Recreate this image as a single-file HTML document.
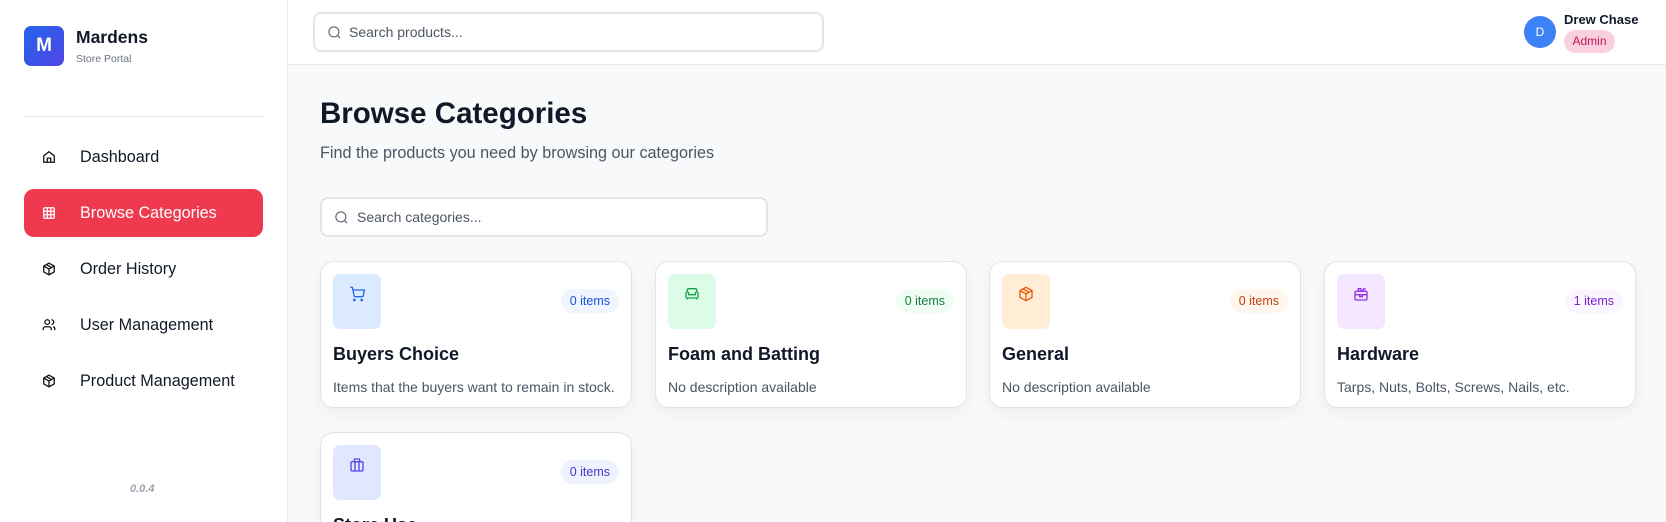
<!DOCTYPE html>
<html style="width:1666px;height:522px;overflow:hidden"><head><meta charset="utf-8"><style>
*{box-sizing:border-box;margin:0;padding:0}
body{width:1666px;height:522px;overflow:hidden;font-family:"Liberation Sans",sans-serif;background:#f8f9fb;position:relative;color:#111827}
.sb{position:absolute;left:0;top:0;width:288px;height:522px;background:#fff;border-right:1px solid #e5e7eb}
.logo{position:absolute;left:24px;top:26px;width:40px;height:40px;border-radius:7px;background:linear-gradient(135deg,#2563eb,#4f46e5);color:#fff;font-weight:bold;font-size:19px;text-align:center;line-height:40px}
.bn{position:absolute;left:76px;top:27px;font-size:17.5px;font-weight:bold;color:#111827}
.bs{position:absolute;left:76px;top:53px;font-size:10.5px;color:#6b7280}
.div{position:absolute;left:24px;top:116px;width:239px;height:1px;background:#e5e7eb}
.nav{position:absolute;left:24px;width:239px;height:48px;border-radius:10px;font-size:16.2px;color:#111827;line-height:48px;padding-left:56px}
.nav svg{position:absolute;left:18px;top:17px}
.nav.act{background:#ef394e;color:#fff}
.ver{position:absolute;left:130px;top:483px;font-size:11px;font-style:italic;font-weight:bold;color:#9ca3af}
.top{position:absolute;left:288px;top:0;right:0;height:65px;background:#fff;border-bottom:1px solid #e5e7eb}
.srch{position:absolute;border:2px solid #e3e5e9;border-radius:8px;background:#fff;font-size:14px;color:#4b5563}
.srch svg{position:absolute;left:12px}
.av{position:absolute;left:1524px;top:16px;width:32px;height:32px;border-radius:50%;background:#3b82f6;color:#fff;font-size:12px;text-align:center;line-height:32px}
.un{position:absolute;left:1564px;top:12px;font-size:13px;font-weight:bold;color:#111827}
.role{position:absolute;left:1564px;top:30px;height:23px;width:51px;border-radius:12px;background:#fbd0de;color:#be185d;font-size:12px;text-align:center;line-height:23px}
h1{position:absolute;left:320px;top:97px;font-size:29.5px;font-weight:bold;color:#111827}
.sub{position:absolute;left:320px;top:144px;font-size:16.2px;color:#4b5563}
.card{position:absolute;width:312px;height:147px;background:#fff;border:1px solid #e2e4e8;border-radius:14px;box-shadow:0 6px 16px rgba(0,0,0,.05)}
.ib{position:absolute;left:12px;top:12px;width:48px;height:55px;border-radius:7px}
.ib svg{position:absolute;left:16px;top:12px}
.bd{position:absolute;right:12px;top:27px;height:24px;padding:0 9px;border-radius:12px;font-size:12.5px;line-height:24px}
.ct{position:absolute;left:12px;top:82px;font-size:18px;font-weight:bold;color:#111827}
.cd{position:absolute;left:12px;top:117px;font-size:14px;color:#4b5563}
</style></head><body>
<div class="sb">
<div class="logo">M</div><div class="bn">Mardens</div><div class="bs">Store Portal</div>
<div class="div"></div>
<div class="nav" style="top:133px"><svg width="14" height="14" viewBox="0 0 24 24" fill="none" stroke="#111" stroke-width="2.2"><path d="M3 10l9-7 9 7v11H3z"/><path d="M9 21v-7h6v7"/></svg>Dashboard</div>
<div class="nav act" style="top:189px"><svg width="14" height="14" viewBox="0 0 24 24" fill="none" stroke="#fff" stroke-width="2.2"><rect x="3" y="3" width="18" height="18" rx="2"/><path d="M3 9h18M3 15h18M9 3v18M15 3v18"/></svg>Browse Categories</div>
<div class="nav" style="top:245px"><svg width="14" height="14" viewBox="0 0 24 24" fill="none" stroke="#111" stroke-width="2.2"><path d="M12 2l9 5v10l-9 5-9-5V7z"/><path d="M3 7l9 5 9-5M12 12v10M7.5 4.5l9 5"/></svg>Order History</div>
<div class="nav" style="top:301px"><svg width="14" height="14" viewBox="0 0 24 24" fill="none" stroke="#111" stroke-width="2.2"><circle cx="9" cy="7" r="4"/><path d="M2 21v-2a4 4 0 014-4h6a4 4 0 014 4v2M16 3a4 4 0 010 8M22 21v-2a4 4 0 00-3-4"/></svg>User Management</div>
<div class="nav" style="top:357px"><svg width="14" height="14" viewBox="0 0 24 24" fill="none" stroke="#111" stroke-width="2.2"><path d="M12 2l9 5v10l-9 5-9-5V7z"/><path d="M3 7l9 5 9-5M12 12v10M7.5 4.5l9 5"/></svg>Product Management</div>
<div class="ver">0.0.4</div>
</div>
<div class="top"></div>
<div class="srch" style="left:313px;top:12px;width:511px;height:40px;line-height:36px;padding-left:34px"><svg style="top:11px" width="15" height="15" viewBox="0 0 24 24" fill="none" stroke="#6b7280" stroke-width="2"><circle cx="11" cy="11" r="8"/><path d="M21 21l-4.3-4.3"/></svg>Search products...</div>
<div class="av">D</div><div class="un">Drew Chase</div><div class="role">Admin</div>
<h1>Browse Categories</h1>
<div class="sub">Find the products you need by browsing our categories</div>
<div class="srch" style="left:320px;top:197px;width:448px;height:40px;line-height:36px;padding-left:35px"><svg style="top:11px" width="15" height="15" viewBox="0 0 24 24" fill="none" stroke="#6b7280" stroke-width="2"><circle cx="11" cy="11" r="8"/><path d="M21 21l-4.3-4.3"/></svg>Search categories...</div>

<div class="card" style="left:320px;top:261px"><div class="ib" style="background:#dbeafe"><svg width="16" height="16" viewBox="0 0 24 24" fill="none" stroke="#2563eb" stroke-width="2"><circle cx="8" cy="21" r="1"/><circle cx="19" cy="21" r="1"/><path d="M2 2h3l2.7 12.4a2 2 0 002 1.6h9.7a2 2 0 002-1.6L23 6H6"/></svg></div><div class="bd" style="background:#eff6ff;color:#1d4ed8">0 items</div><div class="ct">Buyers Choice</div><div class="cd">Items that the buyers want to remain in stock.</div></div>
<div class="card" style="left:655px;top:261px"><div class="ib" style="background:#dcfce7"><svg width="16" height="16" viewBox="0 0 24 24" fill="none" stroke="#16a34a" stroke-width="2"><path d="M19 9V6a2 2 0 00-2-2H7a2 2 0 00-2 2v3"/><path d="M3 16a2 2 0 002 2h14a2 2 0 002-2v-5a2 2 0 00-4 0v2H7v-2a2 2 0 00-4 0z"/><path d="M5 18v2M19 18v2"/></svg></div><div class="bd" style="background:#f0fdf4;color:#15803d">0 items</div><div class="ct">Foam and Batting</div><div class="cd">No description available</div></div>
<div class="card" style="left:989px;top:261px"><div class="ib" style="background:#ffedd5"><svg width="16" height="16" viewBox="0 0 24 24" fill="none" stroke="#ea580c" stroke-width="2"><path d="M12 2l9 5v10l-9 5-9-5V7z"/><path d="M3 7l9 5 9-5M12 12v10M7.5 4.5l9 5"/></svg></div><div class="bd" style="background:#fff7ed;color:#c2410c">0 items</div><div class="ct">General</div><div class="cd">No description available</div></div>
<div class="card" style="left:1324px;top:261px"><div class="ib" style="background:#f3e8ff"><svg width="16" height="16" viewBox="0 0 24 24" fill="none" stroke="#9333ea" stroke-width="2"><rect x="3" y="8" width="18" height="13" rx="2"/><path d="M3 13h18M10 13v3h4v-3M8 8V4h4v4M14 8l2-4 3 1"/></svg></div><div class="bd" style="background:#faf5ff;color:#7e22ce">1 items</div><div class="ct">Hardware</div><div class="cd">Tarps, Nuts, Bolts, Screws, Nails, etc.</div></div>
<div class="card" style="left:320px;top:432px;height:90px;border-bottom:none;border-radius:14px 14px 0 0"><div class="ib" style="background:#e0e7ff"><svg width="16" height="16" viewBox="0 0 24 24" fill="none" stroke="#4f46e5" stroke-width="2"><rect x="3" y="7" width="18" height="14" rx="2"/><path d="M8 7V4a1 1 0 011-1h6a1 1 0 011 1v3M9 7v14M15 7v14"/></svg></div><div class="bd" style="background:#eef2ff;color:#4338ca">0 items</div><div class="ct">Store Use</div></div>
</body></html>
